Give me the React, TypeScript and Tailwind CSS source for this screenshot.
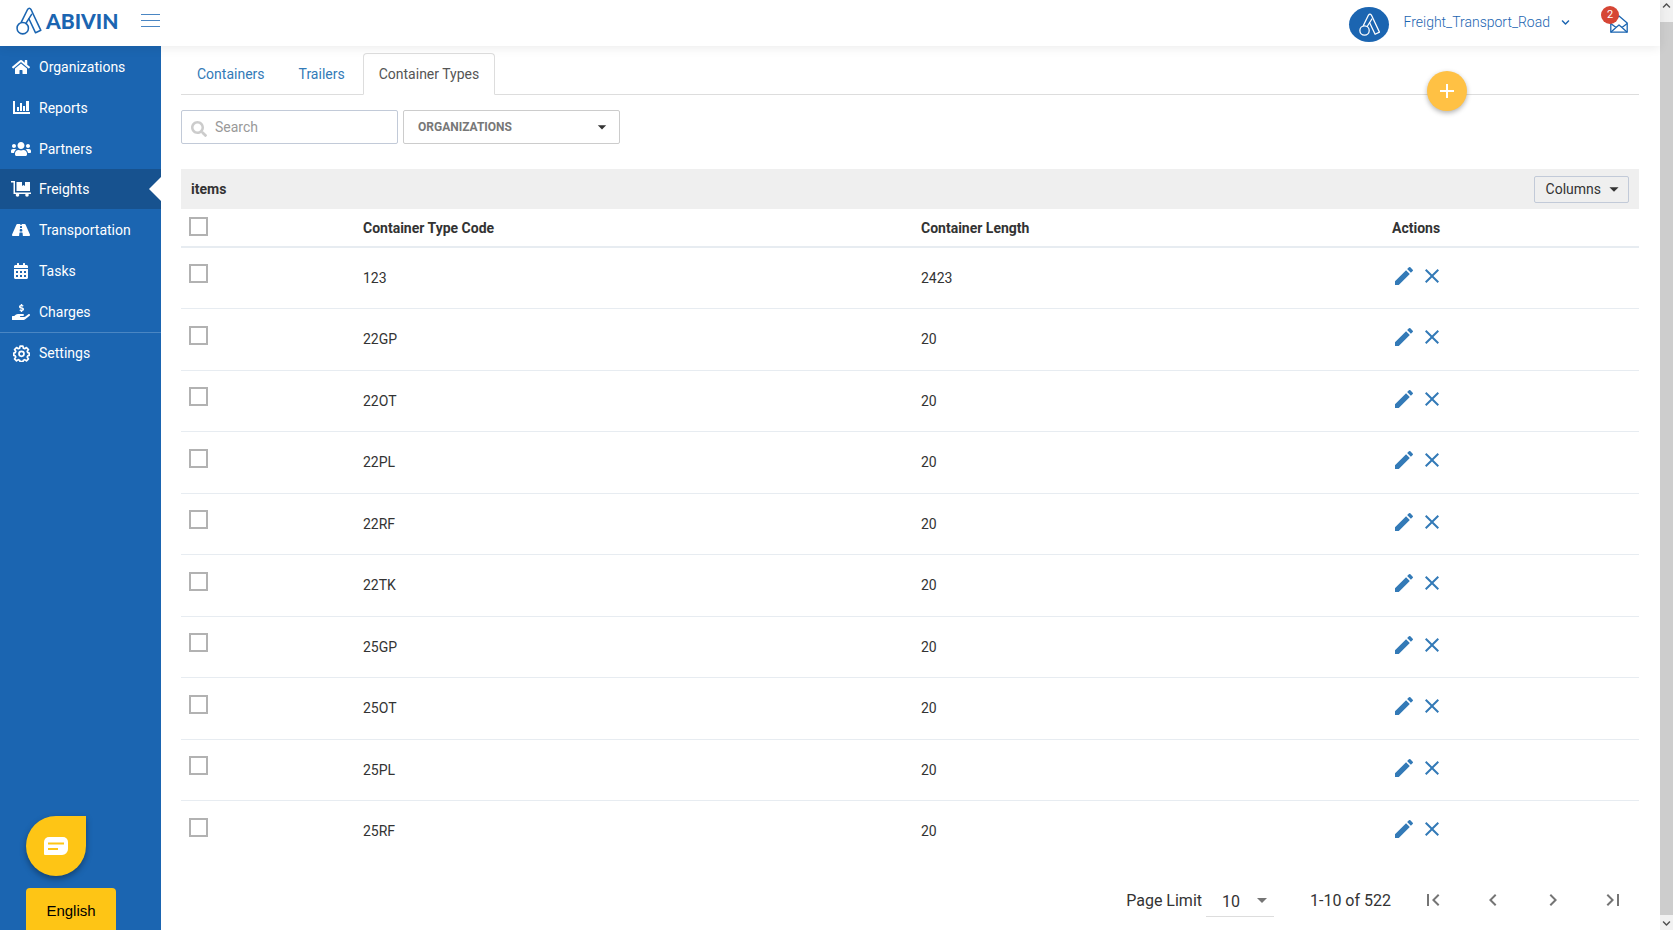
import clsx from "clsx";
import React, { useState } from "react";
import {
  FaCalendarAlt,
  FaChevronDown,
  FaHandHoldingUsd,
  FaHome,
  FaRoad,
  FaSearch,
  FaUsers,
} from "react-icons/fa";
import {
  MdAdd,
  MdArrowDropDown,
  MdChevronLeft,
  MdChevronRight,
  MdClose,
  MdEdit,
  MdFirstPage,
  MdLastPage,
} from "react-icons/md";

interface NavItem {
  label: string;
  icon: React.ReactNode;
}

interface ContainerType {
  code: string;
  length: number;
}

const rows: ContainerType[] = [
  { code: "123", length: 2423 },
  { code: "22GP", length: 20 },
  { code: "22OT", length: 20 },
  { code: "22PL", length: 20 },
  { code: "22RF", length: 20 },
  { code: "22TK", length: 20 },
  { code: "25GP", length: 20 },
  { code: "25OT", length: 20 },
  { code: "25PL", length: 20 },
  { code: "25RF", length: 20 },
];

const tabs = ["Containers", "Trailers", "Container Types"];

const LogoMark = ({ className }: { className?: string }) => (
  <svg
    viewBox="0 0 27 29"
    className={className}
    fill="none"
    stroke="currentColor"
    strokeWidth="1.600"
    strokeLinejoin="round"
    strokeLinecap="round"
  >
    <circle cx="7" cy="22" r="5.900" />
    <path d="M5.500 15.800 12 2.600Q13.800 0 15.600 2.600L25.800 24.200 20.300 26.800 13.400 12.200" />
    <path d="M10.300 17 16.200 7.600" />
  </svg>
);

const ReportsIcon = () => (
  <svg viewBox="0 0 17 13" className="w-[17px]" fill="currentColor">
    <path d="M0 0h2v11h15v2H0zM4 6h2v4H4zM7 2h2v8H7zM10 5h2v5h-2zM13 0h3v10h-3z" />
  </svg>
);

const FreightIcon = () => (
  <svg viewBox="0 0 20 16" className="w-5" fill="currentColor">
    <path d="M0 0h4v11.500h16V13H2.500V1.500H0z" />
    <path d="M5.500 1H11v4l1.500-1L14 5V1h5v9H5.500z" />
    <circle cx="6.500" cy="14" r="1.800" />
    <circle cx="16" cy="14" r="1.800" />
  </svg>
);

const GearIcon = () => (
  <svg
    viewBox="0 0 24 24"
    className="w-[17px]"
    fill="none"
    stroke="currentColor"
    strokeWidth="2.400"
    strokeLinejoin="round"
  >
    <path d="M10 1.500h4l.6 3 1.900.8 2.500-1.700 2.800 2.800-1.700 2.500.8 1.900 2 .6v3.200l-2 .6-.8 1.900 1.700 2.500-2.800 2.800-2.500-1.700-1.900.8-.6 2h-4l-.6-2-1.900-.8L5 22.400l-2.800-2.800 1.700-2.500-.8-1.900-2-.6v-3.200l2-.6.8-1.900-1.700-2.500L5 3.600l2.500 1.700 1.900-.8z" />
    <circle cx="12" cy="12.500" r="3.500" />
  </svg>
);

const MailIcon = () => (
  <svg
    viewBox="0 0 18 18"
    className="h-[18px] w-[18px]"
    fill="none"
    stroke="currentColor"
    strokeWidth="1.300"
    strokeLinejoin="round"
  >
    <path d="M.8 8 9 1l8.200 7v9.200H.8z" />
    <path d="M.8 8.500 6 12.500 9 10l3 2.500 5.200-4M.8 17.200 6 12.500M17.200 17.200 12 12.500" />
  </svg>
);

const nav: NavItem[] = [
  { label: "Organizations", icon: <FaHome size={18} /> },
  { label: "Reports", icon: <ReportsIcon /> },
  { label: "Partners", icon: <FaUsers size={20} /> },
  { label: "Freights", icon: <FreightIcon /> },
  { label: "Transportation", icon: <FaRoad size={18} /> },
  { label: "Tasks", icon: <FaCalendarAlt size={16} /> },
  { label: "Charges", icon: <FaHandHoldingUsd size={18} /> },
  { label: "Settings", icon: <GearIcon /> },
];

const Header = () => (
  <header className="relative z-10 flex h-[46px] items-center justify-between bg-white pr-8 pl-4 text-[#1b65b1] shadow-[0_2px_10px_rgba(0,0,0,0.08)]">
    <div className="flex items-center">
      <a href="#" className="flex h-10 items-center gap-1 pb-1" aria-label="Abivin">
        <LogoMark className="w-[26px]" />
        <span className="w-[75px] font-[Lato] text-[21px] leading-6 font-black">
          ABIVIN
        </span>
      </a>
      <button aria-label="Toggle menu" className="ml-5 flex w-[19px] flex-col gap-[5px] pb-[6px]">
        <span className="h-px w-full bg-[#4a86c3]"></span>
        <span className="h-px w-full bg-[#4a86c3]"></span>
        <span className="h-px w-full bg-[#4a86c3]"></span>
      </button>
    </div>

    <div className="flex items-center">
      <div className="mt-[2px] flex h-[35px] w-10 items-center justify-center rounded-[50%] bg-[#1b65b1] text-white">
        <LogoMark className="h-[23px]" />
      </div>
      <button className="ml-[14px] flex items-center gap-[11px] pb-[2px] text-sm font-light">
        Freight_Transport_Road
        <FaChevronDown size={9} />
      </button>
      <button aria-label="Messages" className="relative mt-[2px] ml-10">
        <MailIcon />
        <span className="absolute -top-[9px] -left-[9px] flex h-[18px] w-[18px] items-center justify-center rounded-full bg-[#d64635] text-[11px] text-white">
          2
        </span>
      </button>
    </div>
  </header>
);

const Sidebar = () => (
  <aside className="flex w-[161px] shrink-0 flex-col justify-between bg-[#1b65b1]">
    <nav>
      {nav.map((item) => (
        <a
          key={item.label}
          href="#"
          className={clsx(
            "relative flex items-center border-[#4a86c3] pl-[10px] text-sm text-white",
            item.label === "Freights" ? "h-10 bg-[#17528f]" : "h-[41px]",
            item.label === "Settings" && "border-t"
          )}
        >
          <span className="mr-[7px] flex w-[22px] justify-center">{item.icon}</span>
          {item.label}
          {item.label === "Freights" && (
            <span className="absolute right-0 border-y-[12px] border-r-[12px] border-y-transparent border-r-white"></span>
          )}
        </a>
      ))}
    </nav>

    <div className="flex flex-col items-start gap-3 pl-[26px]">
      <button
        aria-label="Open chat"
        className="flex h-[60px] w-[60px] items-center justify-center rounded-full rounded-tr-md bg-[#fec515] shadow-[0_3px_6px_rgba(0,0,0,0.35)]"
      >
        <svg viewBox="0 0 24 18" className="w-6">
          <path
            d="M5 0h14a5 5 0 0 1 5 5v7a6 6 0 0 1-6 6H1a1 1 0 0 1-1-1V5a5 5 0 0 1 5-5z"
            fill="#fff"
          />
          <path d="M4 6.500h16M4 12h10" stroke="#fec515" strokeWidth="2" />
        </svg>
      </button>
      <button className="h-[42px] w-[90px] rounded-t bg-[#fec515] pt-1 font-['Liberation_Sans',sans-serif] text-[15px] text-black">
        English
      </button>
    </div>
  </aside>
);

const Checkbox = ({ label }: { label: string }) => (
  <input
    type="checkbox"
    aria-label={label}
    className="block h-[19px] w-[19px] appearance-none border-2 border-[#b2b2b2] bg-white checked:bg-[#1b65b1]"
  />
);

const ContainerTable = () => (
  <table className="w-full table-fixed border-collapse text-left text-sm text-[#333]">
    <colgroup>
      <col className="w-[174px]" />
      <col />
      <col className="w-[471px]" />
      <col className="w-[255px]" />
    </colgroup>
    <thead>
      <tr className="h-[38px] border-b-2 border-[#e7ecf1]">
        <th className="pb-[2px] pl-2">
          <Checkbox label="Select all" />
        </th>
        <th className="pl-2 font-bold">Container Type Code</th>
        <th className="pl-2 font-bold">Container Length</th>
        <th className="pl-2 font-bold">Actions</th>
      </tr>
    </thead>
    <tbody>
      {rows.map((row) => (
        <tr
          key={row.code}
          className="border-b border-[#e7ecf1] last:border-0 odd:h-[61px] even:h-[62px]"
        >
          <td className="pb-2 pl-2">
            <Checkbox label={`Select ${row.code}`} />
          </td>
          <td className="pl-2">{row.code}</td>
          <td className="pl-2">{row.length}</td>
          <td className="pl-2">
            <div className="flex items-center gap-1 pb-1 text-[#337ab7]">
              <button aria-label={`Edit ${row.code}`}>
                <MdEdit size={24} />
              </button>
              <button aria-label={`Delete ${row.code}`}>
                <MdClose size={24} />
              </button>
            </div>
          </td>
        </tr>
      ))}
    </tbody>
  </table>
);

const Pagination = () => (
  <div className="mt-[22px] mr-[14px] flex items-center justify-end text-base text-[#333]">
    <label htmlFor="limit">Page Limit</label>
    <div className="relative ml-1 flex w-[68px] items-center border-b border-[#ddd]">
      <select id="limit" className="h-8 w-full appearance-none pt-1 pl-4" defaultValue="10">
        <option>10</option>
        <option>20</option>
      </select>
      <MdArrowDropDown
        size={24}
        className="pointer-events-none absolute right-0 text-[#757575]"
      />
    </div>
    <span className="ml-9">1-10 of 522</span>
    <div className="ml-[30px] flex gap-9 pb-[2px] text-[#757575]">
      <button aria-label="First page">
        <MdFirstPage size={24} />
      </button>
      <button aria-label="Previous page">
        <MdChevronLeft size={24} />
      </button>
      <button aria-label="Next page">
        <MdChevronRight size={24} />
      </button>
      <button aria-label="Last page">
        <MdLastPage size={24} />
      </button>
    </div>
  </div>
);

const Scrollbar = () => (
  <div className="flex w-[13px] shrink-0 flex-col items-center bg-[#f1f1f1] text-[#505050]">
    <FaChevronDown size={9} className="mt-px mb-3 rotate-180" />
    <div className="w-full flex-1 bg-[#cdcdcd]"></div>
    <FaChevronDown size={9} className="mt-1 mb-[2px]" />
  </div>
);

export default function App() {
  const [tab, setTab] = useState("Container Types");

  return (
    <div className="flex h-screen overflow-hidden bg-white font-[Roboto,sans-serif]">
      <div className="flex min-w-0 flex-1 flex-col">
        <Header />
        <div className="flex min-h-0 flex-1">
          <Sidebar />
          <main className="min-w-0 flex-1 pt-[7px] pr-[21px] pl-5">
            <div className="relative flex gap-[2px] border-b border-[#ddd] text-sm">
              {tabs.map((name) => (
                <button
                  key={name}
                  onClick={() => setTab(name)}
                  className={clsx(
                    "-mb-px h-[42px] rounded-t border px-[15px]",
                    tab === name
                      ? "border-[#ddd] border-b-white bg-white text-[#555]"
                      : "border-transparent text-[#337ab7]"
                  )}
                >
                  {name}
                </button>
              ))}
              <button
                aria-label="Add container type"
                className="absolute top-[18px] right-[172px] flex h-10 w-10 items-center justify-center rounded-full bg-[#ffc144] text-white shadow-[0_2px_5px_rgba(0,0,0,0.3)]"
              >
                <MdAdd size={24} />
              </button>
            </div>

            <div className="mt-[15px] flex gap-[5px]">
              <div className="relative">
                <FaSearch size={16} className="absolute top-[11px] left-[10px] text-[#ccc]" />
                <input
                  aria-label="Search"
                  placeholder="Search"
                  className="h-[34px] w-[217px] rounded-xs border border-[#c2cad8] pl-[33px] text-sm placeholder:text-[#999]"
                />
              </div>
              <div className="relative">
                <select
                  aria-label="Organizations"
                  className="h-[34px] w-[217px] appearance-none rounded-xs border border-[#ccc] pl-[14px] text-xs font-bold text-[#777]"
                >
                  <option>ORGANIZATIONS</option>
                </select>
                <MdArrowDropDown
                  size={20}
                  className="pointer-events-none absolute top-[7px] right-2 text-[#333]"
                />
              </div>
            </div>

            <div className="mt-[25px] flex h-10 items-center justify-between bg-[#efefef] px-[10px] text-sm text-[#333]">
              <span className="font-bold">items</span>
              <button className="flex h-[27px] items-center rounded-xs border border-[#c2cad8] pr-[3px] pl-[11px]">
                Columns
                <MdArrowDropDown size={22} className="ml-[2px]" />
              </button>
            </div>
            <ContainerTable />
            <Pagination />
          </main>
        </div>
      </div>
      <Scrollbar />
    </div>
  );
}
